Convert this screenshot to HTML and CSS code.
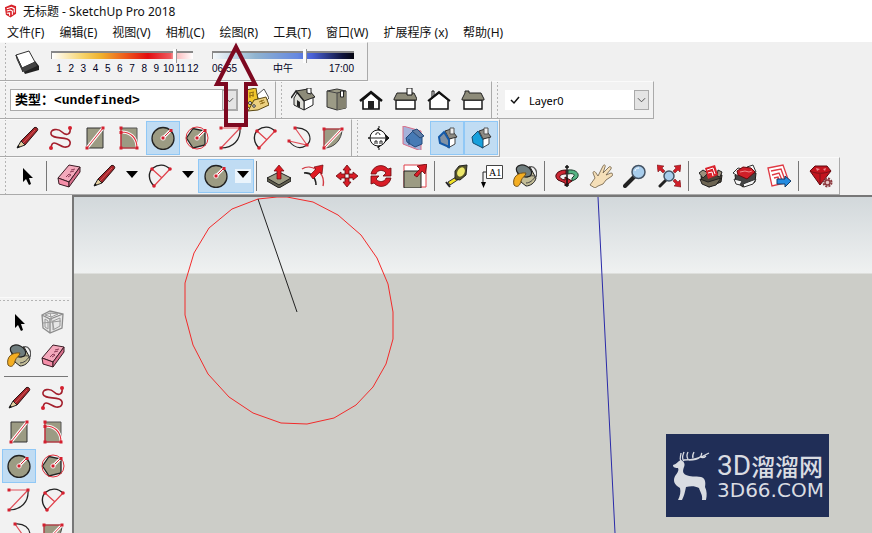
FILE: index.html
```html
<!DOCTYPE html>
<html lang="zh-CN">
<head>
    <meta charset="utf-8">
    <title>无标题 - SketchUp Pro 2018</title>
    <link rel="stylesheet" href="styles.css">
</head>
<body>
    <!-- 图标 -->
    <svg class="sprite" aria-hidden="true">
        <symbol id="i-logo" viewBox="0 0 14 14">
            <path d="M1 3 8 0l5 2v8l-6 4-5-3z" fill="#d8232a"/>
            <path d="M3 4.500 8 3l3 1.500v4M3 7l4-1 2 1v4M3 9.500l3-.5v3" fill="none" stroke="#fff" stroke-width="1.200"/>
        </symbol>
        <symbol id="i-shadow" viewBox="0 0 24 24">
            <path d="M6 17 10 24 24 20V16L20 11z" fill="#222"/>
            <path d="M1 5 14 1 20 12 7 18z" fill="#fff" stroke="#333"/>
            <path d="M1 5 7 18 8 22 2 9z" fill="#bbb" stroke="#333"/>
            <path d="M7 18 20 12 22 16 9 22z" fill="#444"/>
        </symbol>
        <symbol id="i-pencil" viewBox="0 0 24 24">
            <path d="M6 15 18 3c1-2 3-2 4-1s1 2 0 3L10 19z" fill="#a6262b" stroke="#2b1213"/>
            <path d="M8 17 20 4" stroke="#d9595c" stroke-width="1"/>
            <path d="M6 15 10 19 2 22z" fill="#e6cf9f" stroke="#222"/>
            <path d="M2 22l1-3 2 2z" fill="#111"/>
        </symbol>
        <symbol id="i-freehand" viewBox="0 0 24 24">
            <path d="M2 22C3 12 10 20 15 21c7 1 8-6 3-8S3 13 2 8s7-6 11-2 9 3 8-4" fill="none" stroke="#a31f2c" stroke-width="1.600"/>
            <circle cx="2" cy="22" r="2" fill="#d4202f"/><circle cx="21" cy="2" r="2" fill="#d4202f"/>
        </symbol>
        <symbol id="i-rect" viewBox="0 0 24 24">
            <path d="M4 2h16v20H4z" fill="#9c9b83" stroke="#333"/>
            <path d="M4 22 20 2" stroke="#fff" stroke-width="3"/>
            <path d="M4 22 20 2" stroke="#e0303c"/>
            <path d="M2.500 20.500h3v3h-3zM18.500.5h3v3h-3z" fill="#d4202f"/>
        </symbol>
        <symbol id="i-rotrect" viewBox="0 0 24 24">
            <path d="M4 2h16v20H4z" fill="#9c9b83" stroke="#555"/>
            <path d="M4 6c9 0 16 5 16 16" fill="none" stroke="#fff" stroke-width="3"/>
            <path d="M4 2v20h16c0-10-6-16-16-16" fill="none" stroke="#e0303c" stroke-width="1.200"/>
            <path d="M2.500.5h3v3h-3zM2.500 5h3v3h-3zM2.500 20.500h3v3h-3zM18.500 20.500h3v3h-3z" fill="#d4202f"/>
        </symbol>
        <symbol id="i-circle" viewBox="0 0 24 24">
            <circle cx="12" cy="12.500" r="11" fill="#9c9b83" stroke="#222" stroke-width="1.300"/>
            <path d="M12 12 20 4" stroke="#fff" stroke-width="3"/>
            <path d="M12 12 20 4" stroke="#d4202f"/>
            <circle cx="12" cy="12" r="2.500" fill="#fff"/>
            <path d="M10.500 10.500h3v3h-3zM18.500 3h3v3h-3z" fill="#d4202f"/>
        </symbol>
        <symbol id="i-polygon" viewBox="0 0 24 24">
            <path d="M1.500 12 8 2.500 20 5v14L8 22z" fill="#9c9b83" stroke="#222" stroke-width="1.300"/>
            <circle cx="12" cy="12" r="11" fill="none" stroke="#e0303c"/>
            <path d="M12 12 20 4" stroke="#fff" stroke-width="3"/>
            <path d="M12 12 20 4" stroke="#d4202f"/>
            <circle cx="12" cy="12" r="2.500" fill="#fff"/>
            <path d="M10.500 10.500h3v3h-3zM18.500 3h3v3h-3z" fill="#d4202f"/>
        </symbol>
        <symbol id="i-arc" viewBox="0 0 24 24">
            <path d="M21 2c1 12-7 20-19 20" fill="none" stroke="#222" stroke-width="1.200"/>
            <path d="M2 22 21 2H2" fill="none" stroke="#e0505a" stroke-width="1.200"/>
            <path d="M.5 20.500h3v3h-3zM19.500.5h3v3h-3zM.5.5h3v3h-3z" fill="#d4202f"/>
        </symbol>
        <symbol id="i-arc2" viewBox="0 0 24 24">
            <path d="M6 22C0 16 0 8 5 4s12-4 17 1" fill="none" stroke="#222" stroke-width="1.400"/>
            <path d="M6 22 22 5M4 5l10 9" fill="none" stroke="#e0404a" stroke-width="1.200"/>
            <circle cx="6" cy="22" r="1.800" fill="#d4202f"/><circle cx="22" cy="5" r="1.800" fill="#d4202f"/><circle cx="4" cy="5" r="1.800" fill="#d4202f"/>
        </symbol>
        <symbol id="i-arc3" viewBox="0 0 24 24">
            <path d="M8 2c9-1 15 4 15 11S11 27 2 15" fill="none" stroke="#222" stroke-width="1.200"/>
            <path d="M8 2 20 19 2 15" fill="none" stroke="#e0505a" stroke-width="1.200"/>
            <path d="M6.500.5h3v3h-3zM.5 13.500h3v3h-3zM18.500 17.500h3v3h-3z" fill="#d4202f"/>
        </symbol>
        <symbol id="i-pie" viewBox="0 0 24 24">
            <path d="M3 3h18c0 11-8 19-18 19z" fill="#9c9b83" stroke="#444"/>
            <path d="M3 22 21 3" stroke="#fff" stroke-width="3"/>
            <path d="M3 22V3h18z" fill="none" stroke="#e0404a"/>
            <path d="M1.500 1.500h3v3h-3zM19.500 1.500h3v3h-3zM1.500 20.500h3v3h-3z" fill="#d4202f"/>
        </symbol>
        <symbol id="i-cursor" viewBox="0 0 24 24">
            <path d="M8 4v14l3-3 3 6 2-1-2-6h4z" fill="#000"/>
        </symbol>
        <symbol id="i-eraser" viewBox="0 0 24 24">
            <path d="M1 14 12 1 23 3 12 18z" fill="#f4a9bc" stroke="#3b1c25"/>
            <path d="M1 14 12 18V23L2 20z" fill="#f58fa9" stroke="#3b1c25"/>
            <path d="M12 18 23 3v5L12 23z" fill="#d8718d" stroke="#3b1c25"/>
            <path d="m9 13 3-3 2 1-3 2m2-5 4-1m-3-1 4-1" fill="none" stroke="#8b3a55"/>
        </symbol>
        <symbol id="i-down" viewBox="0 0 12 12"><path d="M0 2h12L6 9z" fill="#000"/></symbol>
        <symbol id="i-push" viewBox="0 0 24 24">
            <path d="M0 14v3l12 7 12-7v-3z" fill="#615f4f" stroke="#222"/>
            <path d="M0 14 12 8l12 6-12 7z" fill="#9c9b83" stroke="#222"/>
            <path d="M12 1 17 7h-3v8h-4V7H7z" fill="#e01a22" stroke="#68090d" stroke-width=".7"/>
        </symbol>
        <symbol id="i-offset" viewBox="0 0 24 24">
            <path d="M1 5C10-1 25 8 22 22" fill="none" stroke="#d23b44" stroke-width="1.400"/>
            <path d="M3 9c7-1 12 5 12 12" fill="none" stroke="#222" stroke-width="1.600"/>
            <path d="m9 11 6-6-2-2 9-2-1 9-2-2-7 7z" fill="#e01a22" stroke="#68090d" stroke-width=".7"/>
        </symbol>
        <symbol id="i-move" viewBox="0 0 24 24">
            <path d="m12 1 4 5h-2v4h-4V6H8zM12 23l4-5h-2v-4h-4v4H8zM1 12l5-4v2h4v4H6v2zM23 12l-5-4v2h-4v4h4v2z" fill="#d91d27" stroke="#68090d" stroke-width=".8"/>
        </symbol>
        <symbol id="i-rotate" viewBox="0 0 24 24">
            <path d="M2 10C4 1 14-1 19 5l3-1v8h-8l3-3c-3-4-9-3-10 1z" fill="#d91d27" stroke="#68090d" stroke-width=".8"/>
            <path d="M22 14c-2 9-12 11-17 5l-3 1v-8h8l-3 3c3 4 9 3 10-1z" fill="#d91d27" stroke="#68090d" stroke-width=".8"/>
        </symbol>
        <symbol id="i-scale" viewBox="0 0 24 24">
            <path d="M1 1h22v22H1z" fill="#fff" stroke="#e0404a"/>
            <path d="M1 7h17v17H1z" fill="#9c9b83" stroke="#222"/>
            <path d="m11 11 6-6-3-3 10-2-2 10-3-3-5 6z" fill="#d91d27" stroke="#68090d" stroke-width=".8"/>
        </symbol>
        <symbol id="i-tape" viewBox="0 0 24 24">
            <path d="M3 18 11 13l3 2L5 21z" fill="#f2e326" stroke="#333"/>
            <path d="M1 18l4 5" stroke="#222" stroke-width="2"/>
            <path d="M10 7 14 2l8-1-1 10-6 5-5-1z" fill="#55532b" stroke="#222"/>
            <ellipse cx="16" cy="8" rx="3.500" ry="5" transform="rotate(30 16 8)" fill="#ece76a"/>
        </symbol>
        <symbol id="i-text" viewBox="0 0 24 24">
            <path d="M4 18V8h4" fill="none" stroke="#222"/>
            <path d="M2 18h5l-2.500 6z" fill="#000"/>
            <path d="M7.500 1.500h16v13h-16z" fill="#fff" stroke="#444"/>
            <text x="10" y="12" class="icon-text">A1</text>
        </symbol>
        <symbol id="i-paint" viewBox="0 0 24 24">
            <path d="M16 3c6-2 9 5 7 10" fill="none" stroke="#555" stroke-width="1.300"/>
            <path d="M4 7 17 3l6 11c-1 5-6 8-10 8L8 18z" fill="#c3bd97" stroke="#222"/>
            <path d="M14 13c3-2 6-1 8-1M13 19c4 0 7-3 9-6" fill="none" stroke="#444"/>
            <ellipse cx="11" cy="7" rx="8" ry="5.500" transform="rotate(25 11 7)" fill="#6f7d7e" stroke="#222" stroke-width="1.200"/>
            <path d="M1 21C-1 13 5 8 13 9c0 3-4 4-5 8-1 5-4 7-7 4z" fill="#f4ae22" stroke="#70521d"/>
        </symbol>
        <symbol id="i-orbit" viewBox="0 0 24 24">
            <path d="M13 6c9-1 13 5 8 9l-4 2v-3l2-2c1-2-2-3-6-2z" fill="#55b383" stroke="#173b28"/>
            <path d="M11 6C2 6-2 12 3 16l7 3v3l7-5-7-4v3c-7-1-7-6 1-6z" fill="#cb2733" stroke="#45090e"/>
            <path d="M12 1v22M10 3h4M10 21h4" stroke="#111" stroke-width="1.500"/>
        </symbol>
        <symbol id="i-hand" viewBox="0 0 24 24">
            <path d="M1 21 6 14 4 9c0-2 2-2 3 0l2 3L14 2c1-2 3-1 2 1l-2 6 6-6c1-1 3 0 2 2l-5 6 5-2c2 0 2 2 1 3l-6 4-3 4-5 2-3 2z" fill="#f5dfb8" stroke="#6c5c43" stroke-width=".8"/>
        </symbol>
        <symbol id="i-zoom" viewBox="0 0 24 24">
            <path d="m2 22 9-9" stroke="#222" stroke-width="4" stroke-linecap="round"/>
            <circle cx="15.500" cy="8" r="6.500" fill="#a8cdec" stroke="#445364" stroke-width="1.500"/>
            <path d="M12 7c0-2 2-3 4-3" fill="none" stroke="#fff"/>
        </symbol>
        <symbol id="i-extents" viewBox="0 0 24 24">
            <path d="m3 22 6-6" stroke="#222" stroke-width="3" stroke-linecap="round"/>
            <circle cx="12" cy="12" r="5" fill="#a8cdec" stroke="#445364" stroke-width="1.500"/>
            <path d="m0 1 7 1-2 2 3 3-2 2-3-3-2 2zM24 1l-7 1 2 2-3 3 2 2 3-3 2 2zM24 23l-7-1 2-2-3-3 2-2 3 3 2-2z" fill="#cf1f29" stroke="#68090d" stroke-width=".5"/>
        </symbol>
        <symbol id="i-warehouse" viewBox="0 0 24 24">
            <path d="m2 12 8-4 13 3-1 7-12 5-7-5z" fill="#4a4337" stroke="#1d1a16"/>
            <path d="m0 9 4-3 5 3-5 5zM19 6l4 2-2 5-3-1z" fill="#9b917d" stroke="#222"/>
            <path d="m6 4 10-3 3 10-10 4z" fill="#d9232d"/>
            <path d="m8 6 6-2 2 6M9 9l4-1 1 4" fill="none" stroke="#fff"/>
            <path d="m1 15 8 3 13-4-5 7-7 2-7-3z" fill="#6d6553" stroke="#222"/>
        </symbol>
        <symbol id="i-extwarehouse" viewBox="0 0 24 24">
            <path d="m2 11 8-5 13 3-1 9-12 5-7-5z" fill="#444" stroke="#1d1a16"/>
            <path d="m0 9 5-5 5 1-5 7zM14 3l6-2 3 7-4 2zM1 15l8 2-2 4-4-1zM10 20l13-5-3 5-9 3z" fill="#f5f5f5" stroke="#333"/>
            <path d="m4 7 6-4 8 1 4 4-8 7-9-4z" fill="#cf1f29" stroke="#68090d"/>
            <path d="m7 8 5-1 4 1 3-1" fill="none" stroke="#f18a8e"/>
        </symbol>
        <symbol id="i-layout" viewBox="0 0 24 24">
            <path d="M1 4 16 1l6 17L5 22z" fill="#fff" stroke="#df3a44" stroke-width="1.300"/>
            <path d="m4 7 10-2 4 11M5 11l7-2 3 7M7 14l4-1 1 4" fill="none" stroke="#df3a44" stroke-width="1.400"/>
            <path d="M10 15h8v-3l6 5-6 6v-3h-8z" fill="#248be0" stroke="#123c68"/>
        </symbol>
        <symbol id="i-ruby" viewBox="0 0 24 24">
            <path d="M1 7 6 2h12l4 5-11 14z" fill="#c3141e" stroke="#5d0a10"/>
            <path d="M1 7c6 3 14 3 21 0M11 21V10" fill="none" stroke="#7c1016"/>
            <path d="m7 4 4 1-3 2zM14 5l3-1-1 3z" fill="#f08a8e"/>
            <circle cx="18.500" cy="18.500" r="4" fill="none" stroke="#8d3b40" stroke-width="2" stroke-dasharray="2 1.140"/>
            <circle cx="18.500" cy="18.500" r="2.500" fill="#e7c7c8" stroke="#8d3b40" stroke-width="1.500"/>
        </symbol>
        <symbol id="i-tags" viewBox="0 0 24 24">
            <path d="m12 7 7-6 5 9-8 8z" fill="#fff" stroke="#555"/>
            <path d="M1 2 11 0l2 12-7 9-6-4z" fill="#f0c52c" stroke="#5a4710"/>
            <path d="m3 23 6-11 12-3 3 8-11 5z" fill="#ecd080" stroke="#5a4710"/>
            <path d="m4 5 5-1M4 8l5-1M5 5v5M8 4v5m6 5 5-2m-4 4 5-2m-4-2 2 4" stroke="#8a6710" stroke-width=".9"/>
            <circle cx="5" cy="15" r="1.500" fill="#fff" stroke="#333"/><circle cx="9" cy="18" r="1.300" fill="#fff" stroke="#333"/>
        </symbol>
        <symbol id="i-iso" viewBox="0 0 24 24">
            <path d="M13 12 22 9v8l-9 5z" fill="#fff" stroke="#222"/>
            <path d="M3 10 6 5l7 7v10L3 17z" fill="#deded8" stroke="#222"/>
            <path d="M5 3 17 1l7 8-11 4z" fill="#8d8b79" stroke="#222"/>
            <path d="M0 10 5 3l8 10" fill="none" stroke="#222" stroke-width="1.500"/>
            <path d="M6 12l3 2v6l-3-2z" fill="#222"/>
            <path d="M16 0h4v6l-4-1z" fill="#fff" stroke="#222"/>
        </symbol>
        <symbol id="i-top" viewBox="0 0 24 24">
            <path d="m2 3 10-2 9 2v17l-9 2-10-3z" fill="#9c9b86" stroke="#333"/>
            <path d="m12 4 9-1v17l-9 2z" fill="#858371"/>
            <path d="M2 3l10 2 9-2M12 5v17" fill="none" stroke="#444"/>
            <path d="M15.500 3h3v6h-3z" fill="#fff" stroke="#222"/>
        </symbol>
        <symbol id="i-front" viewBox="0 0 24 24">
            <path d="M4 12 12 5l8 7v9H4z" fill="#fff" stroke="#111" stroke-width="1.600"/>
            <path d="M1 13 12 4l11 9" fill="none" stroke="#111" stroke-width="2.500"/>
            <path d="M9 21v-8h6v8z" fill="#222"/>
        </symbol>
        <symbol id="i-right" viewBox="0 0 24 24">
            <path d="M3 12h19v9H3z" fill="#fff" stroke="#111" stroke-width="1.400"/>
            <path d="m1 11 3-6h17l3 6v1H1z" fill="#8d8b79" stroke="#222"/>
            <path d="M14 0h5v7h-5z" fill="#fff" stroke="#111"/>
        </symbol>
        <symbol id="i-back" viewBox="0 0 24 24">
            <path d="M5 11V3h2v6" fill="#fff" stroke="#111"/>
            <path d="M3 12v9h18v-9l-9-7z" fill="#fff" stroke="#111" stroke-width="1.500"/>
            <path d="M1 13 12 4l11 9" fill="none" stroke="#111" stroke-width="1.800"/>
        </symbol>
        <symbol id="i-left" viewBox="0 0 24 24">
            <path d="M3 12h18v9H3z" fill="#fff" stroke="#111" stroke-width="1.400"/>
            <path d="m1 11 3-6V3h4v2h12l3 6v1H1z" fill="#8d8b79" stroke="#222"/>
        </symbol>
        <symbol id="i-section" viewBox="0 0 24 24">
            <path d="M1 12h4M12 2v-2M12 24v-2M11 2l11 10-11 10z" stroke="#111" fill="#111"/>
            <circle cx="11" cy="12" r="8" fill="#fff" stroke="#111"/>
            <path d="M1 12h20M9 9c-1-3 4-3 4 0M8 18v-3h2v3m3 0v-3h2v3" fill="none" stroke="#222"/>
        </symbol>
        <symbol id="i-plane" viewBox="0 0 24 24">
            <path d="m2 0 18 5v20L2 18z" fill="#a6b2d9" stroke="#d96c86"/>
            <path d="m5 12 7-7 9 4v9l-7 3-8-5z" fill="#477ab5" stroke="#244a7b"/>
            <path d="m11 5 5-2 7 7-4 2zM8 13v6" fill="#5d7ba4" stroke="#244a7b"/>
        </symbol>
        <symbol id="i-cut" viewBox="0 0 24 24">
            <path d="m13 14 7-4v8l-7 4z" fill="#fff" stroke="#444"/>
            <path d="m10 5 6-2 6 8-8 2z" fill="#8d8b84" stroke="#333"/>
            <path d="M15 2h4v6h-4z" fill="#eee" stroke="#555"/>
            <path d="M4 11 9 6l5 8v7l-9-4z" fill="#8192a5" stroke="#145aa9" stroke-width="2"/>
        </symbol>
        <symbol id="i-fill" viewBox="0 0 24 24">
            <path d="m13 14 7-4v8l-7 4z" fill="#fff" stroke="#444"/>
            <path d="m10 5 6-2 6 8-8 2z" fill="#8d8b84" stroke="#333"/>
            <path d="M15 2h4v6h-4z" fill="#eee" stroke="#555"/>
            <path d="M3 11 9 5l5 9v8L4 17z" fill="#18a0dc" stroke="#164d70"/>
        </symbol>
        <symbol id="i-component" viewBox="0 0 24 24">
            <path d="m1 5 8-4 13 3-1 14-12 5-7-5zM1 5l8 4 13-5M9 9v14" fill="#e6e6e6" stroke="#8c8c8c" stroke-width="1.300"/>
            <path d="m4 9 3 2v8l-3-2zM12 11l7-3v8l-7 4zM4 5l5-2 8 1-7 3zM9 3l4 16M2 13l18-2" fill="none" stroke="#9a9a9a"/>
        </symbol>
    </svg>

    <header class="title-bar">
        <svg class="app-icon"><use href="#i-logo"/></svg>
        <span>无标题 - SketchUp Pro 2018</span>
    </header>

    <nav class="menu-bar">
        <a href="#">文件(F)</a>
        <a href="#">编辑(E)</a>
        <a href="#">视图(V)</a>
        <a href="#">相机(C)</a>
        <a href="#">绘图(R)</a>
        <a href="#">工具(T)</a>
        <a href="#">窗口(W)</a>
        <a href="#">扩展程序 (x)</a>
        <a href="#">帮助(H)</a>
    </nav>

    <div class="toolbars">
        <!-- 阴影 -->
        <div class="row row-shadow">
            <div class="toolbar">
                <button class="tool" aria-label="阴影"><svg><use href="#i-shadow"/></svg></button>
                <div class="slider">
                    <input class="range range-date" type="range" min="0" max="100" value="88" aria-label="日期">
                    <div class="ticks months">
                        <span>1</span><span>2</span><span>3</span><span>4</span><span>5</span><span>6</span><span>7</span><span>8</span><span>9</span><span>10</span><span>11</span><span>12</span>
                    </div>
                </div>
                <div class="slider">
                    <input class="range range-time" type="range" min="0" max="100" value="66" aria-label="时间">
                    <div class="ticks"><span>06:55</span><span>中午</span><span>17:00</span></div>
                </div>
            </div>
        </div>

        <!-- 分类 / 视图 / 图层 -->
        <div class="row">
            <div class="toolbar">
                <div class="combo combo-type">
                    <select aria-label="类型">
                        <option>类型：&lt;undefined&gt;</option>
                    </select>
                    <svg class="chevron" viewBox="0 0 10 10"><path d="m1 3 4 4 4-4"/></svg>
                </div>
                <button class="tool" aria-label="分类器"><svg><use href="#i-tags"/></svg></button>
            </div>
            <div class="toolbar">
                <button class="tool" aria-label="等轴"><svg><use href="#i-iso"/></svg></button>
                <button class="tool" aria-label="俯视图"><svg><use href="#i-top"/></svg></button>
                <button class="tool" aria-label="前视图"><svg><use href="#i-front"/></svg></button>
                <button class="tool" aria-label="右视图"><svg><use href="#i-right"/></svg></button>
                <button class="tool" aria-label="后视图"><svg><use href="#i-back"/></svg></button>
                <button class="tool" aria-label="左视图"><svg><use href="#i-left"/></svg></button>
            </div>
            <div class="toolbar">
                <div class="combo combo-layer">
                    <svg class="check" viewBox="0 0 10 10"><path d="m1 5 3 3 5-6"/></svg>
                    <select aria-label="图层">
                        <option>Layer0</option>
                    </select>
                    <svg class="chevron" viewBox="0 0 10 10"><path d="m1 3 4 4 4-4"/></svg>
                </div>
            </div>
        </div>

        <!-- 绘图 / 截面 -->
        <div class="row">
            <div class="toolbar">
                <button class="tool" aria-label="直线"><svg><use href="#i-pencil"/></svg></button>
                <button class="tool" aria-label="手绘线"><svg><use href="#i-freehand"/></svg></button>
                <button class="tool" aria-label="矩形"><svg><use href="#i-rect"/></svg></button>
                <button class="tool" aria-label="旋转矩形"><svg><use href="#i-rotrect"/></svg></button>
                <button class="tool active" aria-label="圆"><svg><use href="#i-circle"/></svg></button>
                <button class="tool" aria-label="多边形"><svg><use href="#i-polygon"/></svg></button>
                <button class="tool" aria-label="圆弧"><svg><use href="#i-arc"/></svg></button>
                <button class="tool" aria-label="两点圆弧"><svg><use href="#i-arc2"/></svg></button>
                <button class="tool" aria-label="三点圆弧"><svg><use href="#i-arc3"/></svg></button>
                <button class="tool" aria-label="扇形"><svg><use href="#i-pie"/></svg></button>
            </div>
            <div class="toolbar">
                <button class="tool" aria-label="剖切面"><svg><use href="#i-section"/></svg></button>
                <button class="tool" aria-label="显示剖切面"><svg><use href="#i-plane"/></svg></button>
                <button class="tool active" aria-label="显示剖面切割"><svg><use href="#i-cut"/></svg></button>
                <button class="tool active" aria-label="显示剖面填充"><svg><use href="#i-fill"/></svg></button>
            </div>
        </div>

        <!-- 使用入门 -->
        <div class="row">
            <div class="toolbar">
                <button class="tool" aria-label="选择"><svg><use href="#i-cursor"/></svg></button>
                <i class="sep"></i>
                <button class="tool" aria-label="擦除"><svg><use href="#i-eraser"/></svg></button>
                <div class="split">
                    <button class="tool" aria-label="直线"><svg><use href="#i-pencil"/></svg></button>
                    <button class="drop" aria-label="更多线条"><svg><use href="#i-down"/></svg></button>
                </div>
                <div class="split">
                    <button class="tool" aria-label="圆弧"><svg><use href="#i-arc2"/></svg></button>
                    <button class="drop" aria-label="更多圆弧"><svg><use href="#i-down"/></svg></button>
                </div>
                <div class="split active">
                    <button class="tool" aria-label="圆"><svg><use href="#i-circle"/></svg></button>
                    <button class="drop" aria-label="更多形状"><svg><use href="#i-down"/></svg></button>
                </div>
                <i class="sep"></i>
                <button class="tool" aria-label="推/拉"><svg><use href="#i-push"/></svg></button>
                <button class="tool" aria-label="偏移"><svg><use href="#i-offset"/></svg></button>
                <button class="tool" aria-label="移动"><svg><use href="#i-move"/></svg></button>
                <button class="tool" aria-label="旋转"><svg><use href="#i-rotate"/></svg></button>
                <button class="tool" aria-label="缩放"><svg><use href="#i-scale"/></svg></button>
                <i class="sep"></i>
                <button class="tool" aria-label="卷尺工具"><svg><use href="#i-tape"/></svg></button>
                <button class="tool" aria-label="文字"><svg><use href="#i-text"/></svg></button>
                <button class="tool" aria-label="材质"><svg><use href="#i-paint"/></svg></button>
                <i class="sep"></i>
                <button class="tool" aria-label="环绕观察"><svg><use href="#i-orbit"/></svg></button>
                <button class="tool" aria-label="平移"><svg><use href="#i-hand"/></svg></button>
                <button class="tool" aria-label="缩放视图"><svg><use href="#i-zoom"/></svg></button>
                <button class="tool" aria-label="缩放范围"><svg><use href="#i-extents"/></svg></button>
                <i class="sep"></i>
                <button class="tool" aria-label="3D Warehouse"><svg><use href="#i-warehouse"/></svg></button>
                <button class="tool" aria-label="Extension Warehouse"><svg><use href="#i-extwarehouse"/></svg></button>
                <button class="tool" aria-label="LayOut"><svg><use href="#i-layout"/></svg></button>
                <i class="sep"></i>
                <button class="tool" aria-label="扩展程序管理器"><svg><use href="#i-ruby"/></svg></button>
            </div>
        </div>
    </div>

    <main class="workspace">
        <aside class="side">
            <div class="palette">
                <button class="tool" aria-label="选择"><svg><use href="#i-cursor"/></svg></button>
                <button class="tool" aria-label="制作组件"><svg><use href="#i-component"/></svg></button>
                <button class="tool" aria-label="材质"><svg><use href="#i-paint"/></svg></button>
                <button class="tool" aria-label="擦除"><svg><use href="#i-eraser"/></svg></button>
                <hr>
                <button class="tool" aria-label="直线"><svg><use href="#i-pencil"/></svg></button>
                <button class="tool" aria-label="手绘线"><svg><use href="#i-freehand"/></svg></button>
                <button class="tool" aria-label="矩形"><svg><use href="#i-rect"/></svg></button>
                <button class="tool" aria-label="旋转矩形"><svg><use href="#i-rotrect"/></svg></button>
                <button class="tool active" aria-label="圆"><svg><use href="#i-circle"/></svg></button>
                <button class="tool" aria-label="多边形"><svg><use href="#i-polygon"/></svg></button>
                <button class="tool" aria-label="圆弧"><svg><use href="#i-arc"/></svg></button>
                <button class="tool" aria-label="两点圆弧"><svg><use href="#i-arc2"/></svg></button>
                <button class="tool" aria-label="三点圆弧"><svg><use href="#i-arc3"/></svg></button>
                <button class="tool" aria-label="扇形"><svg><use href="#i-pie"/></svg></button>
            </div>
        </aside>

        <section class="canvas">
            <svg class="drawing">
                <g transform="translate(-74 -197)" fill="none">
                    <path d="M598 197 615 533" stroke="#2a2aa8"/>
                    <path d="M258 199 232 209 209 228 194 253 185 283V315L193 345 208 374 229 397 253 413 281 423 307 424 334 418 356 405 373 387 386 364 393 339V312L388 284 377 258 361 235 338 215 313 202 287 197H277z" stroke="#f22b2b"/>
                    <path d="M258 199 297 312" stroke="#222"/>
                </g>
            </svg>
            <div class="brand">
                <svg class="deer" viewBox="0 0 38 50">
                    <path d="M9 9c-3 1-4 4-8 5 0 2 1 3 5 3 2 4-4 7-4 12 0 4 3 6 6 8 1 4 0 8-2 12h4c2-4 3-8 4-13 5-1 9-1 13 1 1 4 4 7 3 12h4c1-5 1-9-1-13 1-5 0-9-4-10-6-1-11 0-15-2-4-2-3-5-2-8 1-2 1-5-3-7z" fill="#d9dce2"/>
                    <path d="M9 10C7 7 9 5 9 2M12 10c-3-3-1-6 0-9M12 9c4 0 15-1 25-7M16 8c-2-3-1-5 0-7M21 7c-1-2 0-4 1-6M17 9c4 0 8 0 11-3 2-1 1-3 2-4M28 6c2 1 4 1 6-1" fill="none" stroke="#d9dce2" stroke-width="1.300"/>
                </svg>
                <div class="brand-text">
                    <div class="brand-name"><span>3D</span>溜溜网</div>
                    <div class="brand-site">3D66.COM</div>
                </div>
            </div>
        </section>
    </main>

    <!-- 指向“绘图”菜单的箭头 -->
    <svg class="pointer" viewBox="0 0 46 86"><path d="M23 5 4 42h9v41h20V42h9z"/></svg>
</body>
</html>
```

FILE: styles.css
```css
* {
    box-sizing: border-box;
}

body {
    margin: 0;
    height: 100vh;
    display: flex;
    flex-direction: column;
    overflow: hidden;
    background: #f0f0f0;
    color: #111;
    font-family: "Noto Sans", "Noto Sans CJK SC", sans-serif;
    font-size: 12px;
}

button {
    border: 0;
    padding: 0;
    background: none;
}

.sprite {
    display: none;
}

.icon-text {
    font: 10px "Liberation Serif", serif;
}

/* 标题和菜单 */
.title-bar {
    display: flex;
    align-items: center;
    gap: 6px;
    height: 22px;
    padding: 0 4px;
    background: #fff;
}

.app-icon {
    width: 13px;
    height: 14px;
}

.menu-bar {
    display: flex;
    align-items: center;
    gap: 15px;
    height: 20px;
    padding: 0 7px;
    background: #fff;
}

    .menu-bar a {
        color: #111;
        text-decoration: none;
        white-space: nowrap;
    }

/* 工具栏 */
.row {
    display: flex;
    height: 38px;
}

.row-shadow {
    height: 39px;
}

.toolbar {
    display: flex;
    align-items: center;
    padding: 0 1px 0 10px;
    background: radial-gradient(circle, #b4b4b4 1px, transparent 1px) 4px 2px / 3px 4px repeat-y #f2f2f2;
    border-right: 1px solid #aaa;
    border-bottom: 1px solid #aaa;
    border-top: 1px solid #fafafa;
}

.tool {
    display: flex;
    flex: none;
    align-items: center;
    justify-content: center;
    width: 34px;
    height: 34px;
}

    .tool svg {
        width: 24px;
        height: 24px;
    }

.active {
    background: #c0dcf3;
    outline: 1px solid #90c8f6;
    outline-offset: -1px;
}

.split {
    display: flex;
    height: 34px;
}

    .split .tool {
        width: 36px;
    }

.drop {
    width: 20px;
}

    .drop svg {
        width: 12px;
        height: 12px;
    }

.split.active .drop {
    margin: 10px 3px 10px 1px;
    width: 16px;
    background: #eaf4fc;
}

.sep {
    width: 1px;
    height: 30px;
    margin: 0 5px 0 2px;
    background: #777;
}

/* 阴影滑块 */
.slider {
    width: 142px;
    margin-left: 7px;
}

    .slider + .slider {
        margin: 0 12px 0 19px;
    }

.range {
    -webkit-appearance: none;
    appearance: none;
    display: block;
    width: 100%;
    height: 14px;
    margin: 0;
    background: none;
}

    .range::-webkit-slider-runnable-track {
        height: 8px;
        border-top: 2px solid #888;
        border-left: 1px solid #888;
    }

    .range::-webkit-slider-thumb {
        -webkit-appearance: none;
        width: 4px;
        height: 14px;
        margin-top: -4px;
        background: #fdfdfd;
        border-right: 1px solid #999;
    }

.range-date::-webkit-slider-runnable-track {
    background: linear-gradient(90deg, #fff, #f6d36a 22%, #efb02c 35%, #ee5a1c 52%, #e30c10 68%, #ee5a5e 84%, #fbb4b6 87%, #fff);
}

.range-time::-webkit-slider-runnable-track {
    background: linear-gradient(90deg, #f4f8fa, #90b4d0 30%, #6688e0 60%, #4a62d8 70%, #10143c 92%, #05060f);
}

.ticks {
    display: flex;
    justify-content: space-between;
    color: #002;
    font-family: "Liberation Sans", "Noto Sans CJK SC", sans-serif;
    font-size: 10px;
    line-height: 14px;
}

.months {
    margin: 0 -6px 0 2px;
}

    .months span {
        width: 12px;
        text-align: center;
    }

/* 下拉框 */
.combo {
    position: relative;
    display: flex;
    align-items: center;
    background: #fff;
}

    .combo select {
        -webkit-appearance: none;
        appearance: none;
        flex: 1;
        height: 100%;
        border: 0;
        padding: 0;
        background: none;
        color: #000;
        font: inherit;
    }

.chevron {
    position: absolute;
    top: 0;
    right: 0;
    width: 15px;
    height: 100%;
    padding: 0 2px;
    background: #e4e4e4;
    border: 1px solid #aaa;
    fill: none;
    stroke: #444;
    pointer-events: none;
}

.combo-type {
    width: 228px;
    height: 22px;
    margin-right: 2px;
    padding-left: 4px;
    border: 1px solid #aaa;
    font: bold 13px "Liberation Mono", "Noto Sans CJK SC", monospace;
}

.combo-layer {
    width: 144px;
    height: 20px;
    gap: 9px;
    margin: 0 3px;
    padding-left: 5px;
    font-size: 11px;
}

.check {
    width: 10px;
    height: 10px;
    fill: none;
    stroke: #111;
    stroke-width: 1.5;
}

/* 工作区 */
.workspace {
    flex: 1;
    min-height: 0;
    display: flex;
}

.side {
    flex: none;
    width: 72px;
    padding-top: 102px;
}

.palette {
    display: grid;
    grid-template-columns: 34px 34px;
    width: 71px;
    padding: 7px 0 0 2px;
    background: radial-gradient(circle, #b4b4b4 1px, transparent 1px) 2px 1px / 4px 3px repeat-x #f2f2f2;
    border-top: 1px solid #fafafa;
}

    .palette hr {
        grid-column: 1 / 3;
        width: 64px;
        height: 1px;
        margin: 3px 2px 4px;
        border: 0;
        background: #777;
    }

.canvas {
    position: relative;
    flex: 1;
    overflow: hidden;
    border-top: 2px solid #777;
    border-left: 2px solid #777;
    background: linear-gradient(#d2d8db, #eff1f1 76px, #cccdc8 77px);
}

.drawing {
    position: absolute;
    width: 100%;
    height: 100%;
}

.brand {
    position: absolute;
    right: 43px;
    bottom: 16px;
    display: flex;
    align-items: center;
    gap: 7px;
    width: 163px;
    height: 83px;
    padding-left: 6px;
    background: #202e57;
    color: #d9dce2;
    white-space: nowrap;
}

.deer {
    flex: none;
    width: 38px;
    height: 50px;
}

.brand-name {
    display: flex;
    align-items: center;
    font: 500 24px/28px "Noto Sans CJK SC", sans-serif;
}

    .brand-name span {
        font: 28px/28px Roboto, sans-serif;
    }

.brand-site {
    font: 20px/20px "DejaVu Sans", sans-serif;
}

.pointer {
    position: absolute;
    left: 213px;
    top: 42px;
    width: 46px;
    height: 86px;
    fill: none;
    stroke: #7d0820;
    stroke-width: 4;
    pointer-events: none;
}
```
